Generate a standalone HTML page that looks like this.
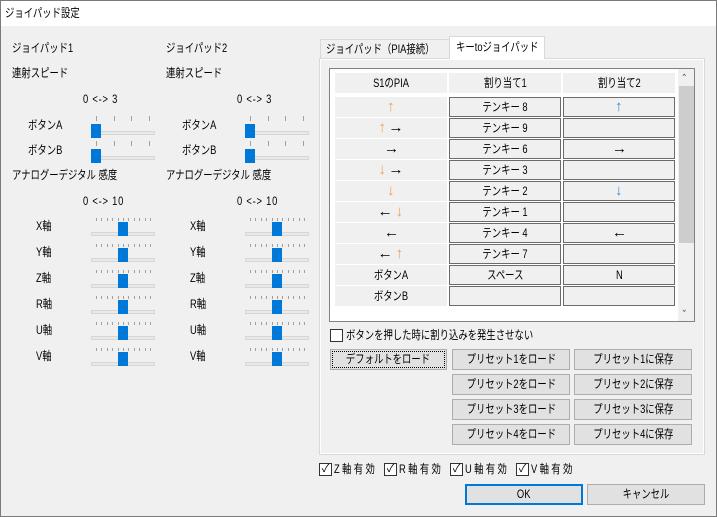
<!DOCTYPE html>
<html><head><meta charset="utf-8"><style>
*{margin:0;padding:0;box-sizing:border-box}
body{width:717px;height:517px;overflow:hidden;background:#f0f0f0;font-family:"Liberation Sans","Noto Sans CJK JP",sans-serif;font-size:12px;color:#000;position:relative}
.a{position:absolute;white-space:nowrap;line-height:14px;transform:scaleX(.78);transform-origin:0 0}
.s{display:inline-block;transform:scaleX(.78);white-space:nowrap}
.win{position:absolute;left:0;top:0;width:717px;height:517px;border:1px solid #7a7a7a}
.title{position:absolute;left:1px;top:1px;width:715px;height:25px;background:#fff}
.trk{position:absolute;height:4px;width:64px;background:#e7eaea;border:1px solid #d6d6d6}
.th{position:absolute;width:10px;height:14px;background:#0078d7}
.tk{position:absolute;width:1px;height:4px;background:#a0a0a0}
.cell{position:absolute;height:20px;width:112px;background:#f0f0f0;text-align:center;line-height:20px;white-space:nowrap}
.bx{border:1px solid #6b6b6b;line-height:18px}
.btn{position:absolute;height:21px;background:#e1e1e1;border:1px solid #adadad;text-align:center;line-height:19px;white-space:nowrap}
.cb{position:absolute;width:13px;height:13px;border:1px solid #333;background:#fff}
.ar{display:inline-block;font-size:15px;transform:scaleX(1.3)}
.up{color:#f0a050}.dn{color:#f0a050}.bl{color:#3d8fd8}
</style></head><body>
<div class="win"></div>
<div class="title"></div>
<div class="a" style="left:5px;top:6px">ジョイパッド設定</div>

<div id="L"></div>

<div style="position:absolute;left:320px;top:39px;width:130px;height:20px;background:#f0f0f0;border:1px solid #d9d9d9;border-bottom:none"></div>
<div class="a" style="left:326px;top:42px">ジョイパッド（PIA接続）</div>
<div style="position:absolute;left:449px;top:36px;width:96px;height:24px;background:#fff;border:1px solid #d9d9d9;border-bottom:none"></div>
<div class="a" style="left:456px;top:40px">キーtoジョイパッド</div>
<div style="position:absolute;left:319px;top:58px;width:386px;height:397px;border:1px solid #d9d9d9;background:#fff"></div>
<div style="position:absolute;left:321px;top:60px;width:382px;height:393px;background:#f0f0f0"></div>
<div style="position:absolute;left:450px;top:57px;width:94px;height:3px;background:#fff"></div>

<div style="position:absolute;left:329px;top:68px;width:366px;height:254px;border:1px solid #828282;background:#fff"></div>
<div style="position:absolute;left:678px;top:69px;width:16px;height:252px;background:#f0f0f0"></div>
<div style="position:absolute;left:679px;top:86px;width:15px;height:157px;background:#cdcdcd"></div>
<div class="a" style="left:681px;top:72px;font-size:10px;color:#606060">&#8963;</div>
<div class="a" style="left:681px;top:303px;font-size:10px;color:#606060">&#8964;</div>
<div id="T"></div>

<div class="cb" style="left:330px;top:329px"></div>
<div class="a" style="left:346px;top:328px">ボタンを押した時に割り込みを発生させない</div>
<div class="btn" style="left:330px;top:349px;width:117px;outline:1px dotted #000;outline-offset:-3px"><span class="s">デフォルトをロード</span></div>
<div id="B"></div>

<div id="C"></div>
<div class="btn" style="left:465px;top:484px;width:118px;border:2px solid #0078d7;line-height:17px"><span class="s">OK</span></div>
<div class="btn" style="left:587px;top:484px;width:118px"><span class="s">キャンセル</span></div>
<script>
var h='';
function t(x,y,s,st){h+='<div class="a" style="left:'+x+'px;top:'+y+'px;'+(st||'')+'">'+s+'</div>';}
[0,154].forEach(function(o,i){
 t(12+o,41,'ジョイパッド'+(i+1));t(12+o,66,'連射スピード');
 t(83+o,92,'0 &lt;-&gt; 3','letter-spacing:1px');
 [['ボタンA',118],['ボタンB',143]].forEach(function(r){
  t(28+o,r[1],r[0]);var y=r[1]+3;
  [96,114,131,149].forEach(function(x){h+='<div class="tk" style="left:'+(x+o)+'px;top:'+(y-5)+'px;height:5px"></div>';});
  h+='<div class="trk" style="left:'+(91+o)+'px;top:'+(y+10)+'px"></div><div class="th" style="left:'+(91+o)+'px;top:'+(y+3)+'px"></div>';
 });
 t(12+o,168,'アナログーデジタル 感度');
 t(83+o,194,'0 &lt;-&gt; 10','letter-spacing:1px');
 ['X','Y','Z','R','U','V'].forEach(function(a,k){
  var y=219+k*26;t(36+o,y,a+'軸');
  for(var j=0;j<11;j++)h+='<div class="tk" style="left:'+(96+o+j*5.4)+'px;top:'+(y-1)+'px;height:3px"></div>';
  h+='<div class="trk" style="left:'+(91+o)+'px;top:'+(y+13)+'px"></div><div class="th" style="left:'+(118+o)+'px;top:'+(y+3)+'px"></div>';
 });
});
document.getElementById('L').innerHTML=h;
h='';
var xs=[335,449,563];
['S1のPIA','割り当て1','割り当て2'].forEach(function(s,i){h+='<div class="cell" style="left:'+xs[i]+'px;top:73px"><span class="s">'+s+'</span></div>';});
function A(c,g){return '<span class="ar '+c+'">'+g+'</span>';}
var U=A('up','↑'),D=A('dn','↓'),R=A('','→'),Lf=A('','←');
var rows=[[U,'テンキー 8',A('bl','↑')],[U+'&nbsp;&nbsp;'+R,'テンキー 9',''],[R,'テンキー 6',R],[D+'&nbsp;&nbsp;'+R,'テンキー 3',''],[D,'テンキー 2',A('bl','↓')],[Lf+'&nbsp;&nbsp;'+D,'テンキー 1',''],[Lf,'テンキー 4',Lf],[Lf+'&nbsp;&nbsp;'+U,'テンキー 7',''],['ボタンA','スペース','N'],['ボタンB','','']];
rows.forEach(function(r,k){var y=97+k*21;r.forEach(function(s,i){h+='<div class="cell'+(i?' bx':'')+'" style="left:'+xs[i]+'px;top:'+y+'px"><span class="s">'+s+'</span></div>';});});
document.getElementById('T').innerHTML=h;
h='';
for(var k=0;k<4;k++){var y=349+k*25;
 h+='<div class="btn" style="left:452px;top:'+y+'px;width:118px"><span class="s">プリセット'+(k+1)+'をロード</span></div>';
 h+='<div class="btn" style="left:574px;top:'+y+'px;width:118px"><span class="s">プリセット'+(k+1)+'に保存</span></div>';}
document.getElementById('B').innerHTML=h;
h='';
[['Z',319],['R',384],['U',450],['V',516]].forEach(function(c){
 h+='<div class="cb" style="left:'+c[1]+'px;top:463px;text-align:center;line-height:11px;font-size:11px">✓</div>';
 t(c[1]+15,462,c[0]+'軸有効','letter-spacing:3px');});
document.getElementById('C').innerHTML=h;
</script>
</body></html>
